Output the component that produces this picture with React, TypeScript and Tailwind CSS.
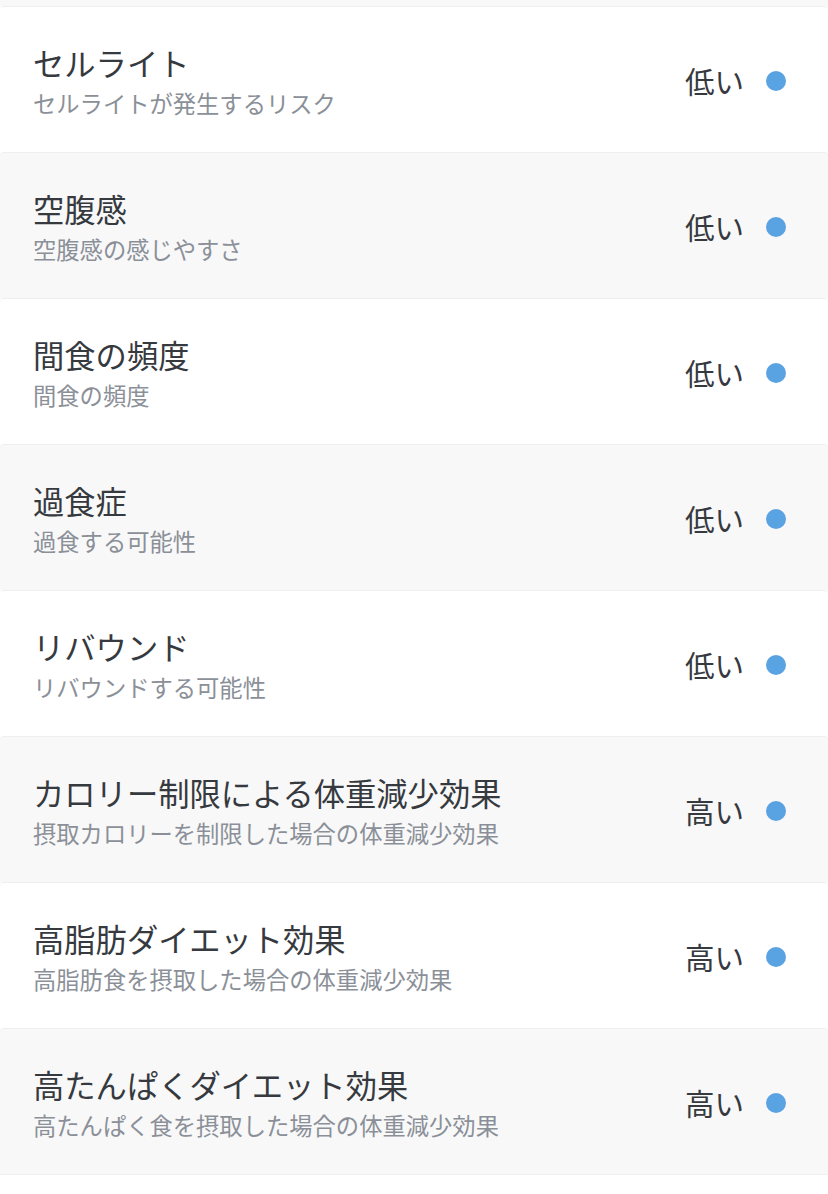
import React from 'react';

interface RiskItem {
  title: string;
  desc: string;
  level: string;
}

const items: RiskItem[] = [
  { title: 'セルライト', desc: 'セルライトが発生するリスク', level: '低い' },
  { title: '空腹感', desc: '空腹感の感じやすさ', level: '低い' },
  { title: '間食の頻度', desc: '間食の頻度', level: '低い' },
  { title: '過食症', desc: '過食する可能性', level: '低い' },
  { title: 'リバウンド', desc: 'リバウンドする可能性', level: '低い' },
  { title: 'カロリー制限による体重減少効果', desc: '摂取カロリーを制限した場合の体重減少効果', level: '高い' },
  { title: '高脂肪ダイエット効果', desc: '高脂肪食を摂取した場合の体重減少効果', level: '高い' },
  { title: '高たんぱくダイエット効果', desc: '高たんぱく食を摂取した場合の体重減少効果', level: '高い' },
];

function Row({ item, shaded }: { item: RiskItem; shaded: boolean }) {
  return (
    <div
      className={`flex items-center justify-between h-[146px] pl-[33px] pr-[42px] border-t border-[#efefef] rounded-t-[4px] ${
        shaded ? 'bg-[#f8f8f8]' : 'bg-white'
      }`}
    >
      <div className="flex flex-col pt-[3px]">
        <div className="text-[31.3px] leading-[36px] text-[#363a3f]">{item.title}</div>
        <div className="mt-2 text-[23.3px] leading-[28px] text-[#8b9098]">{item.desc}</div>
      </div>
      <div className="flex items-center gap-[22px]">
        <span className="text-[29.5px] leading-[36px] text-[#363a3f]">{item.level}</span>
        <span className="w-[20px] h-[20px] rounded-full bg-[#5aa3e2] mt-[3px]" />
      </div>
    </div>
  );
}

export default function App() {
  return (
    <div
      className="w-[828px] h-[1194px] overflow-hidden bg-white"
      style={{ fontFamily: '"Noto Sans CJK JP", "Noto Sans", sans-serif' }}
    >
      {/* tail of the previous card */}
      <div className="h-[6px] bg-[#f8f8f8]" />
      {items.map((item, i) => (
        <Row key={item.title} item={item} shaded={i % 2 === 1} />
      ))}
      <div className="border-t border-[#efefef]" />
    </div>
  );
}
